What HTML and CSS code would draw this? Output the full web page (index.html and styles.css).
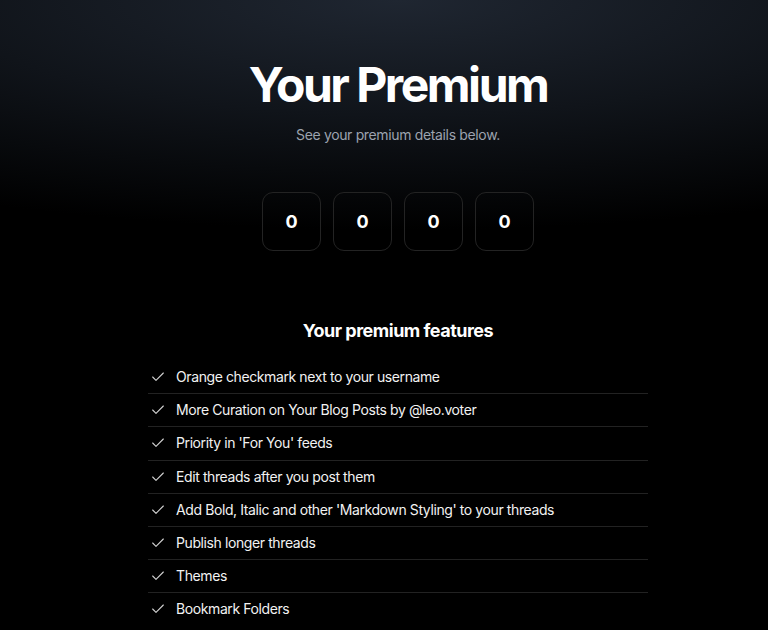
FILE: index.html
```html
<!DOCTYPE html>
<html lang="en">
<head>
  <meta charset="UTF-8">
  <meta name="viewport" content="width=device-width, initial-scale=1.0">
  <title>Your Premium</title>
  <link rel="stylesheet" href="styles.css">
</head>
<body>
  <main class="page">
    <section class="hero">
      <h1>Your Premium</h1>
      <p class="subtitle">See your premium details below.</p>

      <div class="counter">
        <div class="digit">0</div>
        <div class="digit">0</div>
        <div class="digit">0</div>
        <div class="digit">0</div>
      </div>
    </section>

    <section class="features">
      <h2>Your premium features</h2>
      <ul class="feature-list">
        <li><svg class="check" viewBox="0 0 24 24"><path d="M20 6 9 17l-5-5"/></svg>Orange checkmark next to your username</li>
        <li><svg class="check" viewBox="0 0 24 24"><path d="M20 6 9 17l-5-5"/></svg>More Curation on Your Blog Posts by @leo.voter</li>
        <li><svg class="check" viewBox="0 0 24 24"><path d="M20 6 9 17l-5-5"/></svg>Priority in 'For You' feeds</li>
        <li><svg class="check" viewBox="0 0 24 24"><path d="M20 6 9 17l-5-5"/></svg>Edit threads after you post them</li>
        <li><svg class="check" viewBox="0 0 24 24"><path d="M20 6 9 17l-5-5"/></svg>Add Bold, Italic and other 'Markdown Styling' to your threads</li>
        <li><svg class="check" viewBox="0 0 24 24"><path d="M20 6 9 17l-5-5"/></svg>Publish longer threads</li>
        <li><svg class="check" viewBox="0 0 24 24"><path d="M20 6 9 17l-5-5"/></svg>Themes</li>
        <li><svg class="check" viewBox="0 0 24 24"><path d="M20 6 9 17l-5-5"/></svg>Bookmark Folders</li>
      </ul>
    </section>
  </main>
</body>
</html>
```

FILE: styles.css
```css
body {
  margin: 0;
  padding: 0;
  font-family: 'Inter', 'Liberation Sans', sans-serif;
  color: #fff;
  background-color: #000;
  background-image: radial-gradient(ellipse 900px 230px at 52% 0, #1f2631 0%, #10141a 50%, #000 100%);
  background-repeat: no-repeat;
  min-height: 100vh;
}

.page {
  padding-left: 28px;
}

/* Header area */
.hero {
  text-align: center;
  padding-top: 61px;
}

.hero h1 {
  margin: 0;
  font-size: 48px;
  line-height: 48px;
  font-weight: 700;
  letter-spacing: -2.5px;
}

.subtitle {
  margin: 16px 0 0;
  font-size: 14px;
  line-height: 20px;
  color: #9ca3af;
  letter-spacing: -0.35px;
}

.counter {
  display: flex;
  justify-content: center;
  gap: 12px;
  margin-top: 47px;
}

.digit {
  width: 57px;
  height: 57px;
  border: 1px solid #232323;
  border-radius: 11px;
  display: flex;
  align-items: center;
  justify-content: center;
  font-size: 18px;
  font-weight: 700;
}

/* Features */
.features {
  width: 500px;
  margin: 66px auto 0;
}

.features h2 {
  margin: 0 0 16px;
  text-align: center;
  font-size: 18px;
  line-height: 28px;
  font-weight: 700;
  letter-spacing: -0.5px;
}

.feature-list {
  list-style: none;
  margin: 0;
  padding: 0;
}

.feature-list li {
  display: flex;
  align-items: center;
  gap: 10px;
  padding: 6.1px 0 6.1px 2px;
  font-size: 14px;
  line-height: 20px;
  color: #f2f2f2;
  letter-spacing: -0.4px;
  border-bottom: 1px solid #222;
}

.feature-list li:last-child {
  border-bottom: none;
}

.check {
  width: 16px;
  height: 16px;
  flex-shrink: 0;
  fill: none;
  stroke: #d4d4d4;
  stroke-width: 1.6;
  stroke-linecap: round;
  stroke-linejoin: round;
}
```
